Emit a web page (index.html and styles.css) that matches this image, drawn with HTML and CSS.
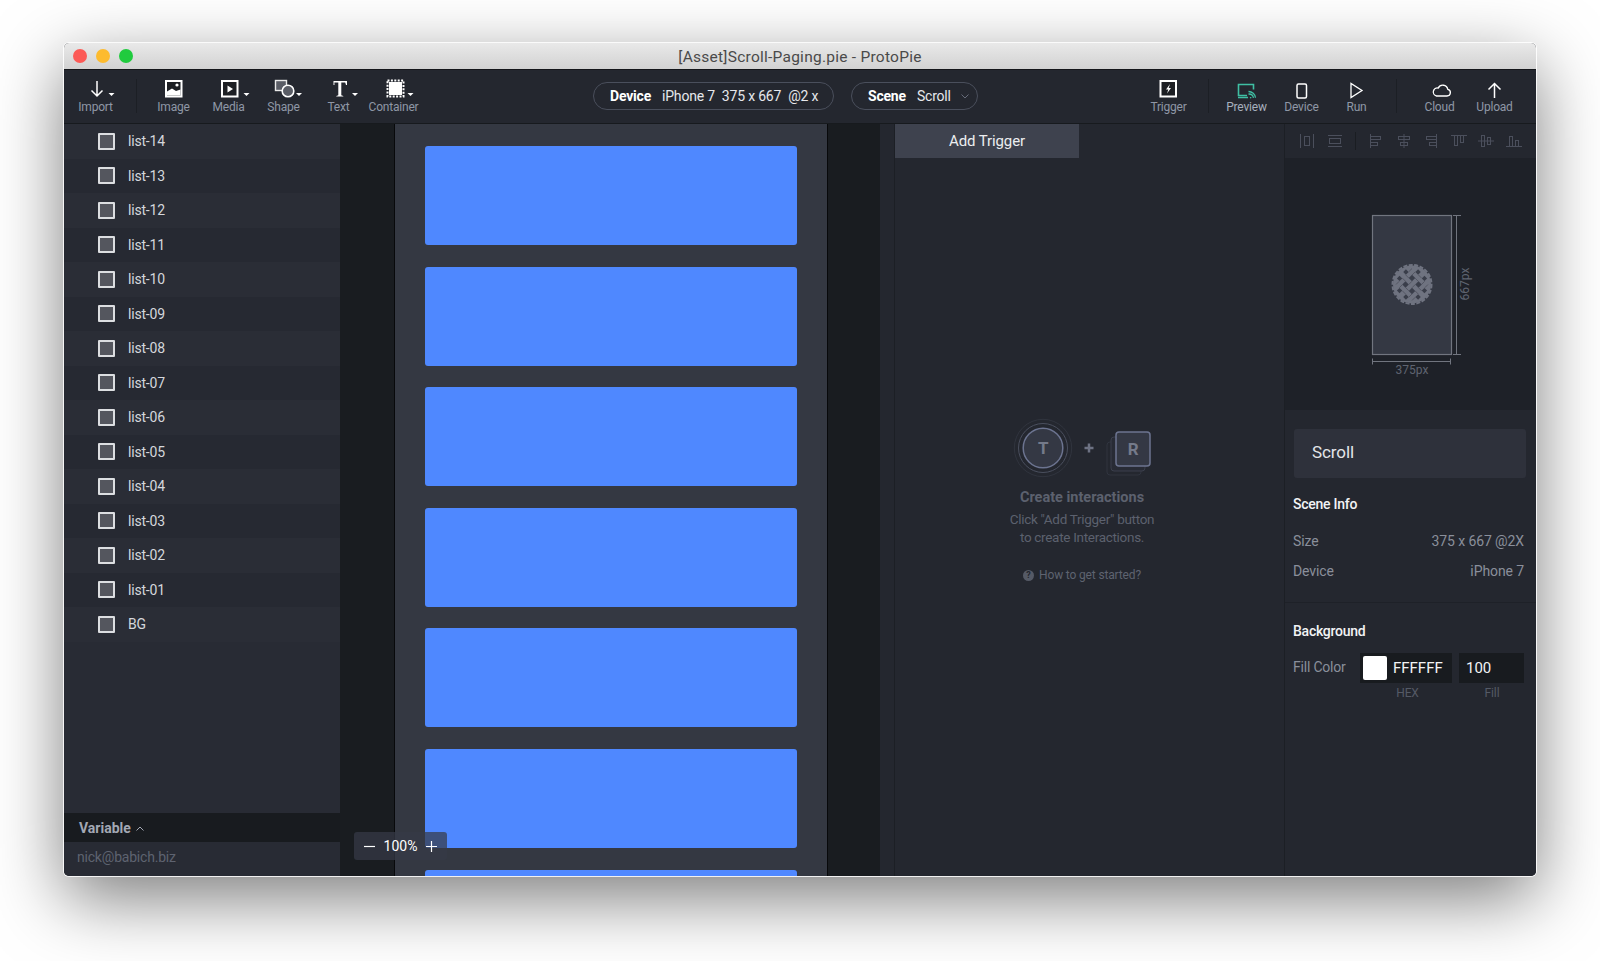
FILE: index.html
```html
<!DOCTYPE html>
<html lang="en">
<head>
<meta charset="utf-8">
<title>ProtoPie</title>
<link rel="stylesheet" href="styles.css">
</head>
<body>
<div class="window">
  <header class="titlebar">
    <div class="lights"><i class="light red"></i><i class="light yellow"></i><i class="light green"></i></div>
    <div class="title">[Asset]Scroll-Paging.pie - ProtoPie</div>
  </header>
  <nav class="toolbar">
    <div class="tool">
      <svg class="ico" viewBox="0 0 55 24"><path d="M29 4v15M23.500 13.500l5.500 5.500 5.500-5.500" class="st"/><path d="M40.500 16h6l-3 3z" class="fw"/></svg>
      <span>Import</span>
    </div>
    <div class="sep sep-left"></div>
    <div class="tool">
      <svg class="ico" viewBox="0 0 55 24"><rect x="20" y="4" width="15.500" height="15.500" class="st sq"/><path d="M21 18.500v-4l5-3 4 2.500 4.500-1.500v6z" class="fw"/><circle cx="31" cy="8" r="1.600" class="fw"/></svg>
      <span>Image</span>
    </div>
    <div class="tool">
      <svg class="ico" viewBox="0 0 55 24"><rect x="21" y="4" width="15.500" height="15.500" class="st sq"/><path d="M26.500 8.500v7l5.500-3.500z" class="fw"/><path d="M42.500 16h6l-3 3z" class="fw"/></svg>
      <span>Media</span>
    </div>
    <div class="tool">
      <svg class="ico" viewBox="0 0 55 24"><rect x="19.500" y="3.500" width="11" height="10" class="sh"/><circle cx="32" cy="14" r="5.800" class="sc"/><path d="M40 16h6l-3 3z" class="fw"/></svg>
      <span>Shape</span>
    </div>
    <div class="tool">
      <svg class="ico" viewBox="0 0 55 24"><path d="M22.500 8V4h13.500v4h-1l-.8-2.500h-3.900v12.700l2 .8v.5h-7v-.5l2-.8V5.500h-3.900L23.500 8z" class="fw"/><path d="M41 16h6l-3 3z" class="fw"/></svg>
      <span>Text</span>
    </div>
    <div class="tool">
      <svg class="ico" viewBox="0 0 55 24"><rect x="23" y="5" width="13" height="13" class="fw"/><rect x="21.500" y="3.500" width="16" height="16" class="dash"/><path d="M41.500 16h6l-3 3z" class="fw"/></svg>
      <span>Container</span>
    </div>
    <div class="pills">
      <div class="pill pill-device"><b>Device</b><span>iPhone 7</span><span>375 x 667</span><span>@2 x</span></div>
      <div class="pill pill-scene"><b>Scene</b><span>Scroll</span><svg class="chev" viewBox="0 0 8 5"><path d="M.5.500 4 4 7.500.500"/></svg></div>
    </div>
    <div class="tools-right">
      <div class="tool">
        <svg class="ico" viewBox="0 0 55 24"><rect x="19.500" y="4" width="15.500" height="15.500" class="st sq"/><path d="M29 7l-4 5.500h2.300L26 16.500l4-5.500h-2.300z" class="fw"/></svg>
        <span>Trigger</span>
      </div>
      <div class="sep sep-trig"></div>
      <div class="tool">
        <svg class="ico" viewBox="0 0 55 24"><path d="M28 18.500h-8.500V7.500h15v5" class="gs"/><path d="M19 20.500h10" class="gs"/><path d="M31 20.800a1.500 1.500 0 0 1 1.300 0M29.500 17a4.800 4.800 0 0 1 5 3.800M29.500 14.500a7 7 0 0 1 7 6.300" class="gs gs-thin"/></svg>
        <span class="active-label">Preview</span>
      </div>
      <div class="tool">
        <svg class="ico" viewBox="0 0 55 24"><rect x="23" y="7" width="9.500" height="14" rx="1.500" class="st"/></svg>
        <span>Device</span>
      </div>
      <div class="tool">
        <svg class="ico" viewBox="0 0 55 24"><path d="M22 6.500v14l11-7z" class="st st-thin"/></svg>
        <span>Run</span>
      </div>
      <div class="sep sep-run"></div>
      <div class="tool">
        <svg class="ico" viewBox="0 0 55 24"><path d="M24.500 19h10.500a3.400 3.400 0 0 0 .8-6.700 5.100 5.100 0 0 0-9.600-1.200A4 4 0 0 0 24.500 19z" class="st st-thin"/></svg>
        <span>Cloud</span>
      </div>
      <div class="tool">
        <svg class="ico" viewBox="0 0 55 24"><path d="M27.500 21V7M21.500 12.500l6-6 6 6" class="st"/></svg>
        <span>Upload</span>
      </div>
    </div>
  </nav>
  <main class="workspace">
    <aside class="layers">
      <ul class="layer-list">
        <li class="layer"><i class="check"></i>list-14</li>
        <li class="layer"><i class="check"></i>list-13</li>
        <li class="layer"><i class="check"></i>list-12</li>
        <li class="layer"><i class="check"></i>list-11</li>
        <li class="layer"><i class="check"></i>list-10</li>
        <li class="layer"><i class="check"></i>list-09</li>
        <li class="layer"><i class="check"></i>list-08</li>
        <li class="layer"><i class="check"></i>list-07</li>
        <li class="layer"><i class="check"></i>list-06</li>
        <li class="layer"><i class="check"></i>list-05</li>
        <li class="layer"><i class="check"></i>list-04</li>
        <li class="layer"><i class="check"></i>list-03</li>
        <li class="layer"><i class="check"></i>list-02</li>
        <li class="layer"><i class="check"></i>list-01</li>
        <li class="layer"><i class="check"></i>BG</li>
      </ul>
      <div class="variable">Variable<svg viewBox="0 0 8 5"><path d="M.5 4.500 4 1l3.500 3.500"/></svg></div>
      <div class="account">nick@babich.biz</div>
    </aside>
    <section class="stage">
      <div class="phone">
        <div class="card"></div><div class="card"></div><div class="card"></div><div class="card"></div><div class="card"></div><div class="card"></div><div class="card"></div>
      </div>
      <div class="zoombar"><svg viewBox="0 0 12 12"><path d="M0 6h12"/></svg><span>100%</span><svg viewBox="0 0 12 12"><path d="M0 6h12M6 0v12"/></svg></div>
    </section>
    <section class="interactions">
      <div class="gutter"></div>
      <div class="int-main">
        <div class="add-trigger">Add Trigger</div>
        <div class="empty">
          <svg class="empty-art" viewBox="0 0 170 64" aria-hidden="true">
            <circle cx="46" cy="32" r="28.700" class="ring1"/><circle cx="46" cy="32" r="24.500" class="ring2"/><circle cx="46" cy="32" r="19.800" class="ring3"/>
            <path d="M92 27.500v9M87.500 32h9" class="plus"/>
            <rect x="110" y="26" width="34" height="33" rx="3" class="back2"/><rect x="114" y="21" width="34" height="34" rx="3" class="back1"/><rect x="119" y="16" width="34" height="34" rx="3" class="front"/>
            <text x="46" y="38" class="art-t">T</text><text x="136" y="39" class="art-t">R</text>
          </svg>
          <h3>Create interactions</h3>
          <p>Click "Add Trigger" button<br>to create Interactions.</p>
          <div class="help"><i>?</i>How to get started?</div>
        </div>
      </div>
    </section>
    <aside class="inspector">
      <div class="align">
        <svg viewBox="0 0 16 16"><path d="M1.500 1v14M14.500 1v14"/><rect x="5.500" y="3.500" width="5" height="9"/></svg>
        <svg viewBox="0 0 16 16"><path d="M1 2.500h14M1 13.500h14"/><rect x="2.500" y="5.500" width="11" height="5"/></svg>
        <i class="align-sep"></i>
        <svg viewBox="0 0 16 16"><path d="M2.500 1v14"/><rect x="2.500" y="3.500" width="10" height="3"/><rect x="2.500" y="9.500" width="7" height="3"/></svg>
        <svg viewBox="0 0 16 16"><path d="M8 1v14"/><rect x="2.500" y="3.500" width="11" height="3"/><rect x="4.500" y="9.500" width="7" height="3"/></svg>
        <svg viewBox="0 0 16 16"><path d="M13.500 1v14"/><rect x="3.500" y="3.500" width="10" height="3"/><rect x="6.500" y="9.500" width="7" height="3"/></svg>
        <svg viewBox="0 0 16 16"><path d="M0 2.500h16"/><rect x="3.500" y="2.500" width="3" height="10"/><rect x="9.500" y="2.500" width="3" height="7"/></svg>
        <svg viewBox="0 0 16 16"><path d="M0 8h16"/><rect x="3.500" y="2.500" width="3" height="11"/><rect x="9.500" y="4.500" width="3" height="7"/></svg>
        <svg viewBox="0 0 16 16"><path d="M0 13.500h16"/><rect x="3.500" y="3.500" width="3" height="10"/><rect x="9.500" y="7.500" width="3" height="6"/></svg>
      </div>
      <div class="preview">
        <svg class="device-map" viewBox="0 0 110 170" aria-hidden="true">
          <rect x="7.500" y="7.500" width="79" height="139" class="map-rect"/>
          <path d="M91.500 7.500v139M88 7.500h8M88 146.500h8M7.500 153.500h78M7.500 150.500v6M85.500 150.500v6" class="map-line"/>
          <g transform="translate(47 76.500)">
            <circle r="19" class="pie"/><circle r="19.500" class="pie-edge"/>
            <g class="pie-holes" transform="rotate(45)">
              <rect x="-6.900" y="-6.900" width="4.600" height="4.600"/><rect x="2.300" y="-6.900" width="4.600" height="4.600"/>
              <rect x="-6.900" y="2.300" width="4.600" height="4.600"/><rect x="2.300" y="2.300" width="4.600" height="4.600"/>
              <rect x="-15" y="-6.400" width="3.800" height="3.800"/><rect x="-15" y="2.600" width="3.800" height="3.800"/>
              <rect x="11.200" y="-6.400" width="3.800" height="3.800"/><rect x="11.200" y="2.600" width="3.800" height="3.800"/>
              <rect x="-6.400" y="-15" width="3.800" height="3.800"/><rect x="2.600" y="-15" width="3.800" height="3.800"/>
              <rect x="-6.400" y="11.200" width="3.800" height="3.800"/><rect x="2.600" y="11.200" width="3.800" height="3.800"/>
              <path class="pie-weave" d="M-2.300-2.300v4.600M2.300-2.300v4.600M-11.300-11.300v4.600M-6.700-11.300v4.600M6.700-11.300v4.600M11.300-11.300v4.600M-11.300 6.700v4.600M-6.700 6.700v4.600M6.700 6.700v4.600M11.300 6.700v4.600M-11.300-2.300h4.600M-11.300 2.300h4.600M6.700-2.300h4.600M6.700 2.300h4.600M-2.300-11.300h4.600M-2.300-6.700h4.600M-2.300 6.700h4.600M-2.300 11.300h4.600"/>
            </g>
          </g>
          <text x="47" y="166" class="map-text">375px</text>
          <text x="0" y="0" class="map-text" transform="translate(104 76) rotate(-90)">667px</text>
        </svg>
      </div>
      <div class="props">
        <div class="name-field">Scroll</div>
        <h4>Scene Info</h4>
        <div class="row"><span>Size</span><span>375 x 667 @2X</span></div>
        <div class="row"><span>Device</span><span>iPhone 7</span></div>
      </div>
      <div class="props-bg">
        <h4>Background</h4>
        <div class="fill-row">
          <span class="fill-label">Fill Color</span>
          <div class="hex"><i class="swatch"></i>FFFFFF</div>
          <div class="fill">100</div>
        </div>
        <div class="fill-captions"><span class="cap-hex">HEX</span><span class="cap-fill">Fill</span></div>
      </div>
    </aside>
  </main>
</div>
</body>
</html>
```
FILE: styles.css
```css
* { box-sizing: border-box; }
html, body { margin: 0; height: 100%; }
body {
  background: #fff;
  padding: 43px 64px 0;
  font-family: Roboto, "Liberation Sans", sans-serif;
  overflow: hidden;
}
.window {
  height: 833px;
  border-radius: 5px;
  display: flex;
  flex-direction: column;
  overflow: hidden;
  background: #24272f;
  box-shadow: 0 0 0 1px rgba(255,255,255,.85), 0 22px 70px rgba(0,0,0,.52);
}
.titlebar {
  height: 27px;
  flex: none;
  display: flex;
  align-items: center;
  justify-content: center;
  position: relative;
  padding-top: 1px;
  background: linear-gradient(#e9e9e9, #d2d2d2);
  border-bottom: 1px solid #14161a;
}
.lights { position: absolute; left: 9px; top: 6px; display: flex; gap: 9px; }
.light { width: 14px; height: 14px; border-radius: 50%; display: block; }
.red { background: #fc5a56; }
.yellow { background: #fdbb2e; }
.green { background: #20cb3e; }
.title { font-size: 15.500px; color: #4a4a4a; letter-spacing: .25px; }

.toolbar {
  height: 54px;
  flex: none;
  display: flex;
  align-items: flex-start;
  padding-left: 4px;
  background: #24272f;
  border-bottom: 1px solid #171a1e;
}
.tool {
  width: 55px;
  height: 53px;
  flex: none;
  padding-top: 7px;
  display: flex;
  flex-direction: column;
  align-items: center;
  font-size: 12px;
  line-height: 13px;
  letter-spacing: -.2px;
  color: #8f97a6;
}
.ico { width: 55px; height: 24px; display: block; flex: none; }
.st { fill: none; stroke: #fff; stroke-width: 1.500; }
.st-thin { stroke-width: 1.300; }
.sq { stroke-width: 2; fill: #1d1f24; }
.fw { fill: #fff; }
.sh { fill: #5a5d66; stroke: #e9e9e9; stroke-width: 1.400; }
.sc { fill: #5a5d66; stroke: #fff; stroke-width: 1.600; }
.dash { fill: none; stroke: #fff; stroke-width: 2; stroke-dasharray: 2 1.400; }
.gs { fill: none; stroke: #3fbfa3; stroke-width: 1.600; }
.gs-thin { stroke-width: 1.300; }
.active-label { color: #a6afbd; }
.sep { width: 1px; height: 34px; background: #1c1f25; margin-top: 9px; flex: none; }
.sep-left { margin-left: 13px; margin-right: 9px; }
.sep-trig { margin-left: 12px; margin-right: 10px; }
.sep-run { margin-left: 12px; margin-right: 15px; }
.pills { display: flex; gap: 17px; margin-left: 172px; margin-top: 12px; }
.pill {
  height: 28px;
  border: 1px solid #4a4f5c;
  border-radius: 14px;
  display: flex;
  align-items: center;
  padding: 0 0 0 16px;
  font-size: 14px;
  letter-spacing: -.2px;
  color: #e6e8ec;
  white-space: nowrap;
}
.pill b { font-weight: 700; color: #fff; margin-right: 11px; }
.pill-device { width: 241px; }
.pill-device span { margin-right: 7px; }
.pill-scene { width: 127px; }
.chev { width: 8px; height: 5px; flex: none; margin-left: 10px; fill: none; stroke: #666b79; stroke-width: 1; }
.tools-right { display: flex; margin-left: auto; padding-right: 14px; }

.workspace { flex: 1; min-height: 0; display: flex; }
.layers { width: 276px; flex: none; display: flex; flex-direction: column; background: #282b34; }
.layer-list { list-style: none; margin: 0; padding: 0; flex: 1; }
.layer {
  height: 34.500px;
  display: flex;
  align-items: center;
  padding-left: 34px;
  font-size: 14px;
  letter-spacing: -.2px;
  color: #d4d7dc;
}
.layer:nth-child(odd) { background: #2a2d36; }
.layer:nth-child(even) { background: #262932; }
.check {
  width: 17px;
  height: 17px;
  margin-right: 13px;
  border: 2px solid #dcdee1;
  border-radius: 1px;
  background: #54565e;
}
.variable {
  height: 29px;
  flex: none;
  display: flex;
  align-items: center;
  gap: 5px;
  padding-left: 15px;
  background: #181b1f;
  font-size: 14px;
  font-weight: 700;
  color: #a3a8b4;
}
.variable svg { width: 8px; height: 5px; fill: none; stroke: #a3a8b4; stroke-width: 1; margin-top: 2px; }
.account {
  height: 34px;
  flex: none;
  padding: 6px 0 0 13px;
  font-size: 14px;
  letter-spacing: -.2px;
  line-height: 18px;
  color: #5e6370;
}
.stage {
  width: 540px;
  flex: none;
  display: flex;
  position: relative;
  background: #191c20;
  overflow: hidden;
}
.phone {
  width: 434px;
  flex: none;
  margin-left: 54px;
  padding: 22px 30px 0;
  background: #343842;
  border-left: 1px solid #08090b;
  border-right: 1px solid #08090b;
  display: flex;
  flex-direction: column;
  gap: 21.600px;
}
.card { height: 99px; flex: none; background: #4f88ff; border-radius: 3px; }
.zoombar {
  position: absolute;
  left: 14px;
  top: 708px;
  width: 93px;
  height: 28px;
  display: flex;
  align-items: center;
  justify-content: center;
  gap: 9px;
  border-radius: 3px;
  background: rgba(54,58,70,.72);
  font-size: 14px;
  color: #fff;
}
.zoombar svg { width: 11px; height: 11px; fill: none; stroke: #fff; stroke-width: 1.300; }

.interactions { flex: 1; display: flex; min-width: 0; }
.gutter { width: 15px; flex: none; border-right: 1px solid #1c1f25; background: #24272f; }
.int-main { flex: 1; background: #24272f; display: flex; flex-direction: column; }
.add-trigger {
  width: 184px;
  height: 34px;
  background: #3e424e;
  color: #eceef0;
  font-size: 15px;
  letter-spacing: -.1px;
  display: flex;
  align-items: center;
  justify-content: center;
}
.empty {
  margin: 258px 0 0 -15px;
  display: flex;
  flex-direction: column;
  align-items: center;
  color: #5c616e;
  font-size: 13.500px;
  letter-spacing: -.3px;
  text-align: center;
}
.empty-art { width: 170px; height: 64px; display: block; }
.ring1 { fill: none; stroke: #30343e; }
.ring2 { fill: none; stroke: #4a4f5e; }
.ring3 { fill: #343844; stroke: #6c7490; stroke-width: 1.500; }
.plus { stroke: #6d7283; stroke-width: 2.500; fill: none; }
.back2 { fill: #24272f; stroke: #30343f; }
.back1 { fill: #282b35; stroke: #3b3f4c; }
.front { fill: #343844; stroke: #6c7490; stroke-width: 1.500; }
.art-t { font: 700 17px Roboto, sans-serif; fill: #747a8a; text-anchor: middle; }
.empty h3 { margin: 9px 0 0; font-size: 14.500px; line-height: 17px; font-weight: 700; color: #5c616e; letter-spacing: 0; }
.empty p { margin: 5px 0 0; line-height: 17.500px; }
.help { margin-top: 21px; font-size: 12px; letter-spacing: -.15px; line-height: 16px; display: flex; align-items: center; color: #5e6370; }
.help i {
  width: 11px; height: 11px; margin-right: 5px; border-radius: 50%;
  background: #555a66; color: #24272f; font: 700 9px/11px Roboto, sans-serif;
}
.inspector { flex: none; width: 252px; display: flex; flex-direction: column; border-left: 1px solid #1c1f25; background: #24272f; }
.align {
  height: 34px;
  flex: none;
  display: flex;
  align-items: center;
  padding-left: 14px;
  gap: 11.500px;
}
.align svg { width: 16px; height: 16px; flex: none; fill: none; stroke: #4b4f5c; stroke-width: 1; }
.align-sep { width: 1px; height: 18px; margin: 0 .75px; background: #1a1d22; flex: none; }
.preview { height: 252px; flex: none; background: #1e2128; position: relative; }
.device-map { position: absolute; left: 80px; top: 50px; width: 110px; height: 170px; }
.map-rect { fill: #343843; stroke: #71757f; stroke-width: 1.200; }
.map-line { fill: none; stroke: #71757f; stroke-width: 1; }
.pie { fill: #6f7380; }
.pie-edge { fill: none; stroke: #6f7380; stroke-width: 2; stroke-dasharray: 4 1.500; }
.pie-holes rect { fill: #3a3e4a; }
.pie-weave { fill: none; stroke: #4a4d59; stroke-width: .7; }
.map-text { font: 12px Roboto, sans-serif; fill: #5f6470; text-anchor: middle; }
.props { height: 193px; flex: none; padding: 19px 12px 0 8px; border-bottom: 1px solid #1e2128; }
.name-field {
  width: 232px;
  height: 49px;
  margin-left: 1px;
  background: #2e313b;
  border-radius: 3px;
  display: flex;
  align-items: center;
  padding: 0 0 3px 18px;
  font-size: 17px;
  letter-spacing: -.1px;
  color: #e3e5e8;
}
h4 { margin: 0; font-size: 14px; font-weight: 500; letter-spacing: -.25px; color: #f2f3f5; line-height: 16px; }
.props h4 { margin-top: 18px; }
.row { display: flex; justify-content: space-between; color: #8a8f9b; font-size: 14px; letter-spacing: -.1px; line-height: 16px; margin-top: 14px; }
h4 + .row { margin-top: 21px; }
.props-bg { padding: 20px 12px 0 8px; }
.fill-row { display: flex; align-items: center; margin-top: 14px; }
.fill-label { width: 67px; flex: none; padding-bottom: 2px; font-size: 14px; letter-spacing: -.2px; color: #8a8f9b; }
.hex {
  width: 92px; height: 30px; background: #181b1f; display: flex; align-items: center;
  padding-left: 3px; color: #f2f3f5; font-size: 15px;
}
.swatch { width: 24px; height: 24px; margin-right: 6px; background: #fff; border-radius: 2px; }
.fill {
  width: 65px; height: 30px; margin-left: 7px; background: #181b1f; display: flex; align-items: center;
  padding-left: 7px; color: #f2f3f5; font-size: 15px;
}
.fill-captions { height: 16px; margin-top: 2px; font-size: 12px; line-height: 16px; letter-spacing: -.1px; color: #555a66; display: flex; }
.cap-hex { width: 29px; margin-left: 100px; text-align: center; }
.cap-fill { width: 24px; margin-left: 58px; text-align: center; }
```
